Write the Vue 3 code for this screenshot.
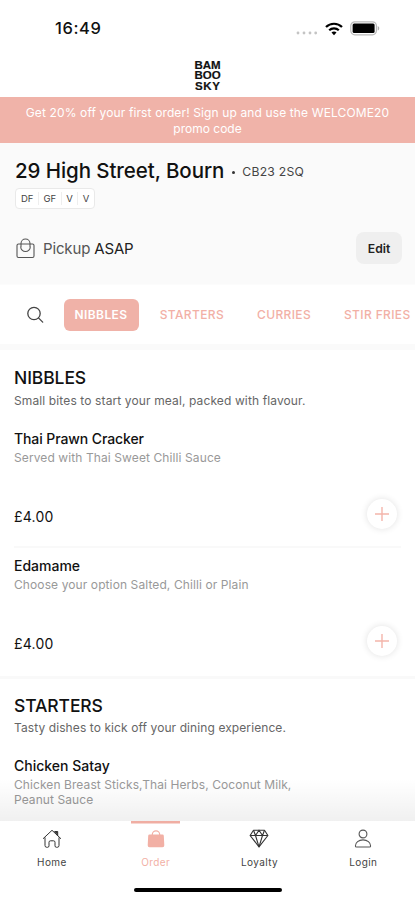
<script setup>
const badges = ['DF', 'GF', 'V', 'V']
const tabs = [
  { label: 'NIBBLES', key: 'nibbles', active: true },
  { label: 'STARTERS', key: 'starters' },
  { label: 'CURRIES', key: 'curries' },
  { label: 'STIR FRIES', key: 'stir' },
]
const nibbles = [
  { name: 'Thai Prawn Cracker', text: 'Served with Thai Sweet Chilli Sauce', price: '£4.00', key: 'prawn' },
  { name: 'Edamame', text: 'Choose your option Salted, Chilli or Plain', price: '£4.00', key: 'edamame' },
]
</script>

<template>
  <div class="screen">
    <header class="status">
      <span class="time">16:49</span>
      <div class="signals">
        <svg class="dots" width="22" height="4" viewBox="0 0 22 4"><g fill="#c4c4c4"><circle cx="2" cy="2" r="1.4" /><circle cx="8" cy="2" r="1.4" /><circle cx="14" cy="2" r="1.4" /><circle cx="19.7" cy="2" r="1.4" /></g></svg>
        <svg class="wifi" width="18" height="14" viewBox="0 0 18 14" fill="none" stroke="#000" stroke-width="2.2">
          <path d="M1 5.1C5.4.6 12.6.6 17 5.1" /><path d="M4.2 8.3c2.7-2.6 6.900-2.600 9.600 0" /><path d="M9 9.500c-1.100 0-1.900.4-2.500 1L9 13.200l2.500-2.700c-.6-.6-1.400-1-2.500-1Z" fill="#000" stroke="none" />
        </svg>
        <svg class="battery" width="30" height="15" viewBox="0 0 30 15"><rect x=".8" y=".8" width="25.600" height="13" rx="4" fill="#fff" stroke="#b9b9b9" stroke-width="1.200" /><rect x="2.600" y="2.600" width="22" height="9.400" rx="1.500" /><path d="M27.700 5v4.600c2.100-.8 2.100-3.800 0-4.600Z" fill="#b0b0b0" /></svg>
      </div>
    </header>

    <div class="brand"><span class="bam">BAM</span><span>BOO</span><span class="sky">SKY</span></div>

    <div class="promo"><span class="promo-a">Get 20% off your first order! Sign up and use the WELCOME20</span><span>promo code</span></div>

    <section class="venue">
      <div class="address"><h1>29 High Street, Bourn</h1><i class="dot"></i><span class="postcode">CB23 2SQ</span></div>
      <div class="badges"><span v-for="(b, i) in badges" :key="i" class="badge">{{ b }}</span></div>
      <div class="pickup">
        <svg width="20" height="21" viewBox="0 0 20 21" fill="none" stroke="#555" stroke-width="1.100" stroke-linecap="round"><rect x="2" y="6" width="17" height="13.500" rx="1.500" /><path d="M6 8.700V5.500a4.500 4.500 0 0 1 9 0v3.200M5.700 8.700a4.800 4.800 0 0 0 9.600 0" /></svg>
        <span class="when">Pickup <b>ASAP</b></span>
        <button class="edit">Edit</button>
      </div>
    </section>

    <nav class="tabs">
      <svg class="search" width="18" height="18" viewBox="0 0 18 18" fill="none" stroke="#444" stroke-width="1.300" stroke-linecap="round"><circle cx="8" cy="7.500" r="6.200" /><path d="m12.700 12.100 4 4" /></svg>
      <span v-for="t in tabs" :key="t.key" class="tab" :class="[t.key, { active: t.active }]">{{ t.label }}</span>
    </nav>

    <main class="menu">
      <section class="group">
        <h2 class="h-nibbles">NIBBLES</h2>
        <p class="intro">Small bites to start your meal, packed with flavour.</p>
        <article v-for="d in nibbles" :key="d.key" class="dish" :class="d.key">
          <h3>{{ d.name }}</h3>
          <p class="detail">{{ d.text }}</p>
          <div class="buy">
            <span class="price">{{ d.price }}</span>
            <button class="add" aria-label="Add"><svg width="16" height="16" viewBox="0 0 16 16" fill="none" stroke="#f4b5ab" stroke-width="1.400"><path d="M8 1v14M1 8h14" /></svg></button>
          </div>
        </article>
      </section>
      <section class="group second">
        <h2 class="h-starters">STARTERS</h2>
        <p class="intro tasty">Tasty dishes to kick off your dining experience.</p>
        <article class="dish satay">
          <h3>Chicken Satay</h3>
          <p class="detail">Chicken Breast Sticks,Thai Herbs, Coconut Milk,<br />Peanut Sauce</p>
        </article>
      </section>
      <div class="fade"></div>
    </main>

    <footer class="bottom">
      <div class="items">
        <a class="item">
          <svg width="20" height="20" viewBox="0 0 20 20" fill="none" stroke="#333" stroke-width="1" stroke-linecap="round" stroke-linejoin="round"><path d="M1.300 9.500 10 1.300l8.700 8.200M3 8.800v7.700a1.800 1.800 0 0 0 1.800 1.800H5.500a1.500 1.500 0 0 0 1.500-1.500v-3.500a1.500 1.500 0 0 1 1.500-1.500h3a1.500 1.500 0 0 1 1.500 1.500v3.500a1.500 1.500 0 0 0 1.500 1.500h.7a1.800 1.800 0 0 0 1.800-1.800V8.800" /><path d="M13 2.500h2.700v4Z" fill="#333" /></svg>
          <span class="l-home">Home</span>
        </a>
        <a class="item current">
          <svg width="20" height="20" viewBox="0 0 20 20" fill="none" stroke="#f2b0a5" stroke-width="1.200"><path d="M6.300 8V5.500a3.700 3.700 0 0 1 7.400 0V8" /><path d="M3.500 5.500h13a1.300 1.300 0 0 1 1.300 1.200l.5 9.600a1.800 1.800 0 0 1-1.800 1.900h-13a1.800 1.800 0 0 1-1.800-1.900l.5-9.600a1.300 1.300 0 0 1 1.300-1.200Z" fill="#f2b0a5" stroke="none" /></svg>
          <span class="l-order">Order</span>
        </a>
        <a class="item">
          <svg width="20" height="20" viewBox="0 0 20 20" fill="none" stroke="#333" stroke-width="1.100" stroke-linejoin="round"><path d="M4.500 1.200h11L18.900 6.500 10 17.800 1.100 6.500Z" /><path d="M1.100 6.500h17.800M4.500 1.200l2 5.300L10 1.200l3.500 5.300 2-5.300M6.500 6.500 10 17.800l3.500-11.300" /></svg>
          <span class="l-loyalty">Loyalty</span>
        </a>
        <a class="item">
          <svg width="20" height="20" viewBox="0 0 20 20" fill="none" stroke="#555" stroke-width="1.100" stroke-linejoin="round"><circle cx="10" cy="5" r="3.900" /><path d="M10 10.900c-4.300 0-7.600 2.500-7.600 6 0 .7.500 1.100 1.200 1.100h12.800c.7 0 1.200-.4 1.200-1.100 0-3.500-3.300-6-7.600-6Z" /></svg>
          <span class="l-login">Login</span>
        </a>
      </div>
      <div class="handle"></div>
    </footer>
  </div>
</template>

<style>
body { margin: 0; background: #fff; }
</style>

<style scoped>
* { box-sizing: border-box; }
h1, h2, h3, p { margin: 0; font-weight: 500; white-space: nowrap; }
button { border: 0; padding: 0; font-family: inherit; }
svg { display: block; flex: none; }
.screen { width: 415px; height: 900px; overflow: hidden; display: flex; flex-direction: column; background: #fff; color: #111; font-family: Inter, sans-serif; }
.status { height: 57px; display: flex; justify-content: space-between; padding: 0 35px 0 55px; }
.time { font-size: 16.500px; font-weight: 500; line-height: 57px; letter-spacing: .6px; }
.signals { display: flex; align-items: center; height: 57px; }
.dots { margin: 9px 7px 0 0; }
.wifi { margin-right: 7px; }
.brand { height: 40px; padding-top: 3px; display: flex; flex-direction: column; align-items: center; font: bold 11.500px/10.300px "Liberation Sans", sans-serif; color: #111; -webkit-text-stroke: .2px #111; }
.sky { letter-spacing: .7px; margin-right: -.7px; }
.promo { height: 46px; padding-top: 8px; background: #f0b3a9; color: #fff; display: flex; flex-direction: column; align-items: center; font-size: 12px; line-height: 16px; white-space: nowrap; }
.promo-a { letter-spacing: .125px; }
.venue { height: 141px; padding: 14px 13px 0 15px; background: #fafafa; }
.address { display: flex; align-items: center; height: 28px; }
h1 { font-size: 20.500px; line-height: 28px; letter-spacing: -.08px; }
.dot { width: 3px; height: 3px; border-radius: 50%; background: #333; margin: 2px 7px 0 8px; }
.postcode { font-size: 12.200px; color: #444; white-space: nowrap; letter-spacing: .25px; }
.badges { display: flex; width: 80px; align-items: center; height: 21px; margin-top: 3px; border: 1px solid #e9e9e9; border-radius: 4px; background: #fff; font-size: 9.500px; color: #444; }
.badge { padding: 0 4.500px; line-height: 13px; border-left: 1px solid #eee; }
.badge:first-child { border-left: 0; padding-left: 5px; }
.pickup { display: flex; align-items: center; height: 32px; margin-top: 23px; }
.when { margin-left: 8px; font-size: 15px; color: #555; white-space: nowrap; letter-spacing: -.15px; }
.when b { font-weight: 400; color: #222; }
.edit { margin-left: auto; width: 46px; height: 32px; border-radius: 8px; background: #efefef; color: #222; font-size: 12.200px; font-weight: 600; }
.tabs { height: 66px; padding-left: 26px; display: flex; align-items: center; border-top: 1px solid #fcfcfc; border-bottom: 6px solid #fafafa; overflow: hidden; }
.search { margin-right: 19.500px; }
.tab { flex: none; font-size: 12px; font-weight: 500; color: #f2b0a6; line-height: 32px; white-space: nowrap; margin-right: 32.900px; letter-spacing: .37px; }
.tab.active { background: #f0b2a8; color: #fff; border-radius: 6px; width: 75px; text-align: center; font-weight: 600; margin-right: 21.200px; letter-spacing: .4px; }
.menu { height: 471px; position: relative; overflow: hidden; }
.group { padding: 16px 14px 0; height: 326px; }
h2 { font-size: 17.500px; line-height: 24px; letter-spacing: -.1px; }
.intro { font-size: 12px; font-weight: 400; line-height: 18px; margin-top: 2px; color: #666; letter-spacing: .12px; }
.dish { height: 127px; padding-top: 8px; }
.prawn { margin-top: 10.500px; border-bottom: 2px solid #f9f9f9; }
.prawn h3 { letter-spacing: -.1px; }
h3 { font-size: 14px; line-height: 20px; }
.detail { font-size: 12px; font-weight: 400; line-height: 18px; color: #999; letter-spacing: .1px; }
.buy { display: flex; justify-content: space-between; align-items: center; height: 32px; margin-top: 31.500px; }
.price { font-size: 14px; padding-top: 4px; letter-spacing: .2px; }
.add { width: 30px; height: 30px; border-radius: 50%; background: #fff; box-shadow: 0 0 7px rgba(0, 0, 0, .12); display: flex; align-items: center; justify-content: center; margin-right: 4px; }
.second { border-top: 3px solid #f9f9f9; padding-top: 15px; }
.tasty { margin-top: 1px; letter-spacing: .09px; }
.satay { margin-top: 11px; }
.satay .detail { line-height: 14.500px; margin-top: 2px; letter-spacing: .08px; }
.fade { position: absolute; left: 0; right: 0; bottom: 0; height: 42px; background: linear-gradient(rgba(0, 0, 0, 0), rgba(0, 0, 0, .06)); }
.bottom { height: 79px; background: #fff; }
.items { display: grid; grid-template-columns: repeat(4, 103.800px); height: 67px; }
.item { display: flex; flex-direction: column; align-items: center; padding-top: 8px; font-size: 10px; line-height: 14px; color: #444; }
.item span { margin-top: 6px; letter-spacing: .4px; }
.current { color: #f2b0a5; background: linear-gradient(#f0aea3, #f0aea3) center top / 49px 2.500px no-repeat; }
.handle { width: 148px; height: 4px; border-radius: 2px; background: #000; margin: 0 auto; }
</style>
